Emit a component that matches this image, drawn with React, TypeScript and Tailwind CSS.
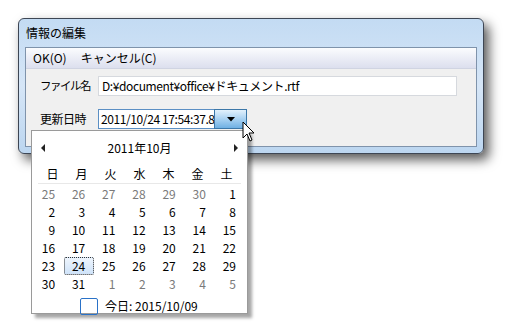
import React from "react";

const days: [number, boolean][][] = [
  [[25, true], [26, true], [27, true], [28, true], [29, true], [30, true], [1, false]],
  [[2, false], [3, false], [4, false], [5, false], [6, false], [7, false], [8, false]],
  [[9, false], [10, false], [11, false], [12, false], [13, false], [14, false], [15, false]],
  [[16, false], [17, false], [18, false], [19, false], [20, false], [21, false], [22, false]],
  [[23, false], [24, false], [25, false], [26, false], [27, false], [28, false], [29, false]],
  [[30, false], [31, false], [1, true], [2, true], [3, true], [4, true], [5, true]],
];

const weekdays = ["日", "月", "火", "水", "木", "金", "土"];

function Cursor() {
  return (
    <svg className="absolute left-[242px] top-[121px]" width="14" height="22" viewBox="0 0 14 22">
      <path
        d="M1 1 L1 17 L5 13 L8 20 L10 19 L7 12 L12 12 Z"
        fill="#fff"
        stroke="#000"
        strokeWidth="1"
        strokeLinejoin="miter"
      />
    </svg>
  );
}

function Calendar() {
  return (
    <div className="absolute left-[31px] top-[130px] w-[217px] h-[184px] bg-white border border-[#9a9a9a] shadow-[4px_4px_3px_rgba(0,0,0,0.35)]">
      {/* month header */}
      <div className="flex items-center h-[34px] px-[8px]">
        <svg width="6" height="8" viewBox="0 0 6 8">
          <path d="M5 0 L1 4 L5 8 Z" fill="#222" />
        </svg>
        <div className="flex-1 text-center text-[12px] text-black">2011年10月</div>
        <svg width="6" height="8" viewBox="0 0 6 8">
          <path d="M1 0 L5 4 L1 8 Z" fill="#222" />
        </svg>
      </div>
      {/* weekdays */}
      <div className="mx-[6px] grid grid-cols-7 h-[19px] border-b border-[#e8e8e8]">
        {weekdays.map((w) => (
          <div key={w} className="text-center text-[12px] leading-[17px] text-black">
            {w}
          </div>
        ))}
      </div>
      <div className="mx-[2px] mt-[1px]">
        {days.map((row, i) => (
          <div key={i} className="grid grid-cols-7 h-[18px]">
            {row.map(([d, other], j) => {
              const sel = i === 4 && j === 1;
              return (
                <div
                  key={j}
                  className={`text-right pr-[8px] text-[12px] leading-[16px] ${
                    other ? "text-[#7a7a7a]" : "text-black"
                  } ${
                    sel
                      ? "border border-dotted border-[#333] bg-gradient-to-b from-[#eef5fd] to-[#cfe3f9] rounded-[2px]"
                      : "border border-transparent"
                  }`}
                >
                  {d}
                </div>
              );
            })}
          </div>
        ))}
      </div>
      <div className="flex items-center ml-[48px] mt-[4px] gap-[7px]">
        <div className="w-[18px] h-[17px] border border-[#2a72c8] rounded-[2px]" />
        <span className="text-[12px] text-black">今日: 2015/10/09</span>
      </div>
    </div>
  );
}

export default function App() {
  return (
    <div
      className="relative w-[506px] h-[326px] bg-white overflow-hidden"
      style={{ fontFamily: '"Noto Sans CJK JP", "Noto Sans", sans-serif' }}
    >
      <div className="pt-[18px] pl-[18px]">
        {/* window */}
        <div className="w-[466px] h-[136px] rounded-[6px] border border-[#3d4654] bg-gradient-to-b from-[#c3dbf3] via-[#d6e6f7] to-[#bcd6f0] shadow-[5px_6px_12px_rgba(0,0,0,0.65)] px-[6px] pb-[6px] flex flex-col">
          <div className="h-[28px] flex items-center pl-[1px] text-[12px] text-black">情報の編集</div>
          <div className="flex-1 border border-[#7f93ab] bg-[#f0f0f0] flex flex-col">
            {/* toolbar */}
            <div className="h-[21px] flex items-center gap-[14px] pl-[7px] text-[12px] text-black bg-gradient-to-b from-[#fbfcfe] to-[#dcdfee] border-b border-[#d0d4e2]">
              <span>OK(O)</span>
              <span>キャンセル(C)</span>
            </div>
            <div className="flex items-center mt-[7px] pl-[14px]">
              <span className="w-[58px] shrink-0 whitespace-nowrap tracking-[-1.5px] text-[11.5px] text-black">ファイル名</span>
              <div className="w-[359px] h-[20px] bg-white border border-[#d6d9de] flex items-center pl-[3px] tracking-[-0.4px] text-[12px] text-black whitespace-nowrap">
                D:¥document¥office¥ドキュメント.rtf
              </div>
            </div>
            <div className="flex items-center mt-[13px] pl-[14px]">
              <span className="w-[58px] shrink-0 whitespace-nowrap tracking-[-0.5px] text-[12px] text-black">更新日時</span>
              <div className="w-[116px] h-[20px] bg-white border border-[#5b8fc4] border-r-0 flex items-center pl-[2px] tracking-[-0.4px] text-[12px] text-black whitespace-nowrap overflow-hidden">
                2011/10/24 17:54:37.8
              </div>
              <div className="w-[33px] h-[20px] border border-[#3c77a8] bg-gradient-to-b from-[#e3f1fc] via-[#a9d2f2] to-[#6fb0e3] flex items-center justify-center">
                <svg width="8" height="5" viewBox="0 0 8 5">
                  <path d="M0 0 L8 0 L4 4.5 Z" fill="#000" />
                </svg>
              </div>
            </div>
          </div>
        </div>
      </div>
      <Calendar />
      <Cursor />
    </div>
  );
}
